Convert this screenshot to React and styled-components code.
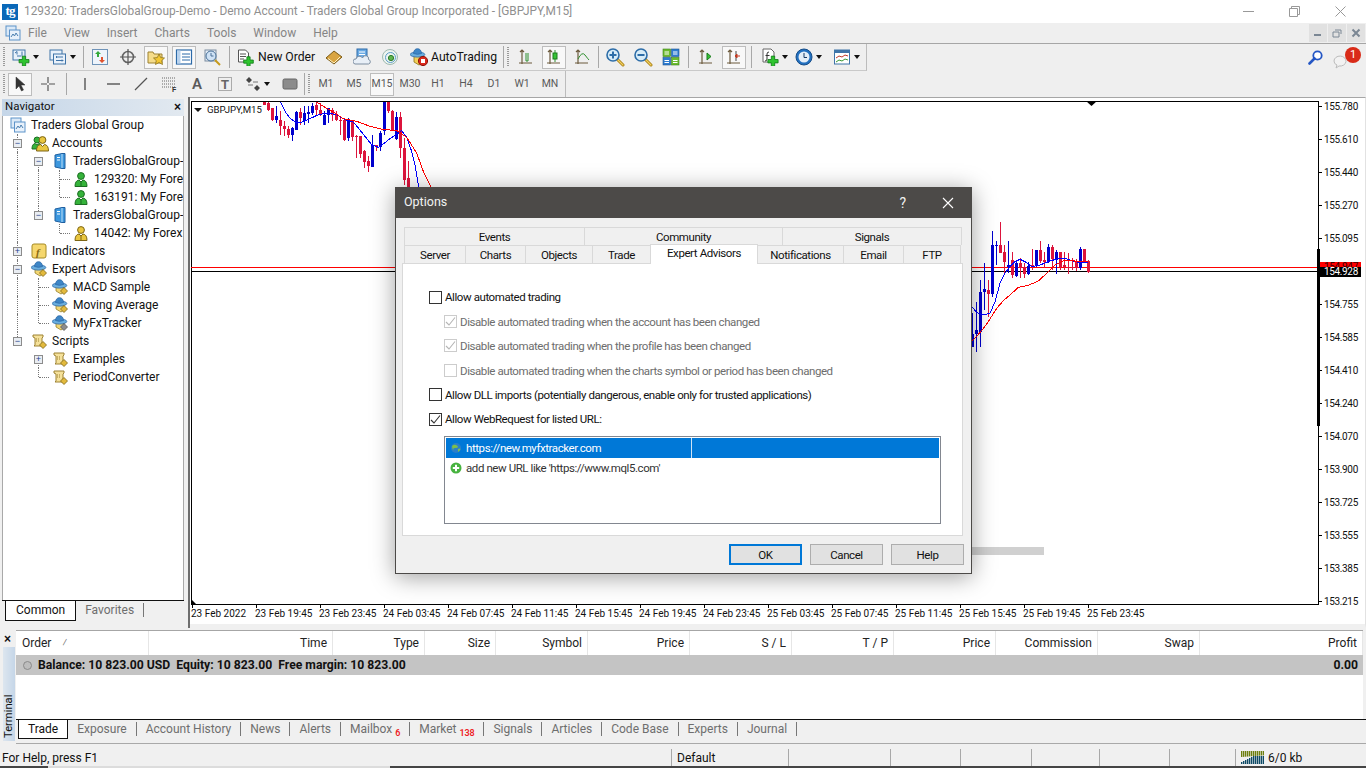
import React from "react";
import styled, { createGlobalStyle } from "styled-components";

const UI = 'Roboto, "Liberation Sans", sans-serif';

const GlobalStyle = createGlobalStyle`
  html, body { margin: 0; padding: 0; background: #f0f0f0; overflow: hidden; }
  * { box-sizing: border-box; }
`;

const Page = styled.div`
  position: relative;
  width: 1366px;
  height: 768px;
  display: flex;
  flex-direction: column;
  overflow: hidden;
  font: 12px/1 ${UI};
  color: #111;
  background: #f0f0f0;
`;

/* title + menu */
const TitleBar = styled.div`
  height: 23px;
  flex: none;
  background: #fff;
  display: flex;
  align-items: center;
  padding-left: 2px;
  color: #8f8f8f;
  font-size: 11.9px;
`;
const Logo = styled.div`
  width: 16px;
  height: 16px;
  background: #0a68b8;
  color: #fff;
  font: bold 13px/14px "Liberation Serif", serif;
  text-align: center;
  margin-right: 6px;
  letter-spacing: -1px;
`;
const WinControls = styled.div`
  margin-left: auto;
  display: flex;
  align-items: center;
  padding-right: 20px;
  gap: 35px;
`;
const MenuBar = styled.div`
  height: 21px;
  flex: none;
  display: flex;
  align-items: center;
  padding-left: 5px;
  background: #efefef;
  border-bottom: 1px solid #a6a6a6;
  color: #858585;
`;
const MenuItem = styled.span`
  margin-left: ${(p) => (p.$first ? "7px" : "17px")};
`;
const MdiGroup = styled.div`
  margin-left: auto;
  display: flex;
  gap: 1px;
  align-self: flex-start;
  padding-right: 1px;
  padding-top: 1px;
`;
const MdiBtn = styled.div`
  width: 18px;
  height: 18px;
  background: #e1e1e1;
  display: flex;
  align-items: center;
  justify-content: center;
`;

/* toolbars */
const ToolRow = styled.div`
  height: ${(p) => p.$h}px;
  flex: none;
  display: flex;
  align-items: center;
  background: #efefef;
`;
const ToolBand = styled.div`
  height: 100%;
  width: ${(p) => p.$w}px;
  display: flex;
  align-items: center;
  gap: 4px;
  padding-left: 3px;
  border-right: 1px solid #bcbcbc;
  border-bottom: ${(p) => (p.$line ? "1px solid #c9c9c9" : "none")};
`;
const Grip = styled.div`
  flex: none;
  width: 2px;
  height: 20px;
  margin-left: ${(p) => p.$ml || 0}px;
  margin-right: ${(p) => p.$mr || 0}px;
  background: repeating-linear-gradient(#9a9a9a 0 1px, transparent 1px 2px);
`;
const Sep = styled.div`
  flex: none;
  width: 1px;
  height: 22px;
  margin-left: ${(p) => p.$ml || 0}px;
  margin-right: ${(p) => p.$mr || 0}px;
  background: #a8a8a8;
`;
const Btn = styled.div`
  flex: none;
  width: ${(p) => p.$w || 24}px;
  height: 23px;
  margin-left: ${(p) => p.$ml || 0}px;
  padding-left: ${(p) => (p.$pl === undefined ? 0 : p.$pl)}px;
  display: flex;
  align-items: center;
  justify-content: ${(p) => (p.$pl === undefined ? "center" : "flex-start")};
  gap: ${(p) => p.$gap || 0}px;
  border: 1px solid ${(p) => (p.$on ? "#bdbdbd" : "transparent")};
  background: ${(p) => (p.$on ? "#f8f8f8" : "transparent")};
  font-size: ${(p) => p.$fs || 12.2}px;
  font-weight: ${(p) => p.$fw || 400};
  white-space: nowrap;
  color: ${(p) => (p.$dim ? "#5a5a5a" : "#111")};
`;
const Caret = styled.i`
  display: block;
  flex: none;
  width: 0;
  height: 0;
  margin-left: 3px;
  border-top: 4px solid #111;
  border-left: 3.5px solid transparent;
  border-right: 3.5px solid transparent;
`;
const BellWrap = styled.div`
  margin-left: auto;
  display: flex;
  align-items: center;
  gap: 10px;
  padding-right: 5px;
`;
const Bubble = styled.div`
  position: relative;
  width: 28px;
  height: 20px;
  padding-top: 7px;
`;
const Badge = styled.div`
  position: absolute;
  right: 0;
  top: -1px;
  width: 16px;
  height: 16px;
  border-radius: 50%;
  background: #d92b18;
  color: #fff;
  font-size: 11px;
  line-height: 16px;
  text-align: center;
`;

/* workspace */
const Workspace = styled.div`
  height: 531px;
  flex: none;
  display: flex;
`;
const Navigator = styled.aside`
  width: 190px;
  flex: none;
  padding: 2px 4px 6px 2px;
  display: flex;
  flex-direction: column;
  border-right: 2px solid #6e6e6e;
`;
const NavHead = styled.div`
  height: 17px;
  flex: none;
  display: flex;
  align-items: center;
  justify-content: space-between;
  padding: 0 3px 2px;
  font-size: 11.5px;
  background: linear-gradient(90deg, #c5d6e8, #e2e9f0);
`;
const CloseMark = styled.span`
  font: bold 12px/1 "Liberation Sans", sans-serif;
  color: #111;
`;
const TreeBox = styled.div`
  flex: 1;
  min-height: 0;
  background: #fff;
  border-left: 1px solid #a9a9a9;
  border-right: 1px solid #a9a9a9;
  overflow: hidden;
  padding-left: 4px;
`;
const TreeRow = styled.div`
  height: 18px;
  display: flex;
  align-items: center;
  white-space: nowrap;
`;
const TreeCell = styled.div`
  position: relative;
  flex: none;
  width: 21px;
  height: 18px;
  display: flex;
  align-items: center;
  justify-content: center;
  &::before {
    content: "";
    position: absolute;
    left: 10px;
    top: ${(p) => (p.$line === "down" ? "9px" : "0")};
    bottom: ${(p) => (p.$line === "up" ? "9px" : "0")};
    border-left: ${(p) => (p.$line ? "1px dotted #777" : "none")};
  }
  &::after {
    content: "";
    position: absolute;
    left: 11px;
    right: 0;
    top: 9px;
    border-top: ${(p) => (p.$arm ? "1px dotted #777" : "none")};
  }
`;
const Expander = styled.div`
  position: relative;
  z-index: 1;
  width: 9px;
  height: 9px;
  background: #e9edf2;
  border: 1px solid #8c8c8c;
  display: flex;
  align-items: center;
  justify-content: center;
  font: 9px/7px "Liberation Sans", sans-serif;
  color: #25408f;
`;
const TreeIcon = styled.div`
  flex: none;
  width: 16px;
  height: 16px;
  margin: 0 5px 0 3px;
`;
const BottomTabs = styled.div`
  flex: none;
  height: ${(p) => p.$h}px;
  display: flex;
  padding-left: ${(p) => p.$pl}px;
  background: #f0f0f0;
  border-top: 1px solid #111;
  white-space: nowrap;
`;
const BottomTab = styled.div`
  height: ${(p) => (p.$on ? p.$th + "px" : "14px")};
  margin-top: ${(p) => (p.$on ? "0" : "2px")};
  display: flex;
  align-items: center;
  padding: ${(p) => (p.$on ? `0 ${p.$px}px 1px` : "0 9px")};
  background: ${(p) => (p.$on ? "#fff" : "transparent")};
  color: ${(p) => (p.$on ? "#111" : "#6e6e6e")};
  border-left: ${(p) => (p.$on ? "1px solid #111" : "none")};
  border-right: 1px solid ${(p) => (p.$on ? "#111" : "#777")};
  border-bottom: ${(p) => (p.$on ? "1px solid #111" : "none")};
`;
const RedCount = styled.span`
  color: #ee1c25;
  font-size: 9px;
  font-weight: 600;
  letter-spacing: -0.2px;
  margin: 8px 0 0 3px;
`;

const ChartWin = styled.main`
  flex: 1;
  min-width: 0;
  background: #fff;
  border-top: 1px solid #a6a6a6;
  padding: 3px 3px 0 1px;
  display: flex;
  flex-direction: column;
  border-right: 1px solid #e2e2e2;
  border-bottom: 4px solid #f0f0f0;
`;
const ChartTop = styled.div`
  display: flex;
  height: 504px;
  flex: none;
`;
const Plot = styled.div`
  position: relative;
  width: 1128px;
  height: 504px;
  flex: none;
  border: 1px solid #000;
  svg { display: block; position: absolute; left: -1px; top: -1px; }
`;
const ChartLabel = styled.div`
  position: absolute;
  left: 2px;
  top: 2px;
  display: flex;
  align-items: center;
  gap: 5px;
  background: #fff;
  padding-right: 1px;
  font-size: 9.6px;
  line-height: 12px;
  color: #111;
  &::before {
    content: "";
    border-top: 4px solid #111;
    border-left: 4px solid transparent;
    border-right: 4px solid transparent;
  }
`;
const PriceAxis = styled.div`
  position: relative;
  flex: 1;
  padding-left: 5px;
`;
const PriceTick = styled.div`
  position: relative;
  height: 10px;
  margin-bottom: 23px;
  font-size: 10px;
  letter-spacing: -0.35px;
  line-height: 12px;
  color: #111;
  &::before {
    content: "";
    position: absolute;
    left: -5px;
    top: 5px;
    width: 3px;
    border-top: 1px solid #000;
  }
`;
const PriceTag = styled.div`
  position: absolute;
  left: 1px;
  top: ${(p) => p.$top}px;
  width: 41px;
  height: ${(p) => p.$h}px;
  padding-left: 4px;
  overflow: hidden;
  background: ${(p) => p.$bg};
  color: ${(p) => p.$fg};
  font-size: 10px;
  letter-spacing: -0.35px;
  line-height: 10px;
`;
const ScaleBar = styled.div`
  position: absolute;
  left: -2px;
  top: 148px;
  width: 3px;
  height: 177px;
  background: #000;
`;
const TimeAxis = styled.div`
  height: 20px;
  flex: none;
  display: flex;
`;
const TimeTick = styled.div`
  position: relative;
  width: 64px;
  flex: none;
  padding-top: 4px;
  font-size: 10px;
  line-height: 10px;
  color: #111;
  white-space: nowrap;
  &::before {
    content: "";
    position: absolute;
    left: 1px;
    top: -1px;
    height: 4px;
    border-left: 1px solid #000;
  }
`;

/* terminal */
const Terminal = styled.section`
  height: 118px;
  flex: none;
  display: flex;
  padding-top: 2px;
  background: #f0f0f0;
`;
const DockStrip = styled.div`
  width: 16px;
  flex: none;
  display: flex;
  flex-direction: column;
  padding: 3px 1px 5px 3px;
  gap: 4px;
`;
const DockClose = styled(CloseMark)`
  padding-left: 1px;
  height: 10px;
`;
const DockTitle = styled.div`
  flex: 1;
  display: flex;
  justify-content: flex-start;
  padding-top: 3px;
  writing-mode: vertical-rl;
  transform: rotate(180deg);
  background: linear-gradient(90deg, #c5d6e8, #dde6ef);
  font-size: 11.2px;
  line-height: 12px;
  color: #111;
`;
const TermBody = styled.div`
  flex: 1;
  min-width: 0;
  display: flex;
  flex-direction: column;
  padding-right: 3px;
  padding-bottom: 2px;
`;
const HeadRow = styled.div`
  height: 25px;
  flex: none;
  display: grid;
  grid-template-columns: 133px 184px 92px 71px 92px 102px 102px 102px 102px 102px 102px 1fr;
  background: #fff;
  border-top: 1px solid #a6a6a6;
`;
const HeadCell = styled.div`
  display: flex;
  align-items: center;
  justify-content: ${(p) => (p.$left ? "space-between" : "flex-end")};
  padding: 0 5px 0 ${(p) => (p.$left ? "6px" : "0")};
  border-right: 1px solid #e6e6e6;
  color: #222;
`;
const SortMark = styled.span`
  color: #777;
  margin-right: 76px;
  font-size: 10px;
`;
const BalanceRow = styled.div`
  height: 20px;
  flex: none;
  display: flex;
  align-items: center;
  padding: 0 5px 0 7px;
  background: #c4c4c4;
  font-weight: 700;
  font-size: 12.2px;
  color: #111;
  gap: 6px;
`;
const BalanceDot = styled.span`
  width: 9px;
  height: 9px;
  border-radius: 50%;
  border: 1px solid #8a8a8a;
  background: #bdbdbd;
`;
const BalanceValue = styled.span`
  margin-left: auto;
`;
const EmptyGrid = styled.div`
  flex: 1;
  background: #fff;
`;
const TermTabsWrap = styled.div`
  height: 25px;
  flex: none;
  border-bottom: 1px solid #a9a9a9;
  margin-right: -3px;
`;
const StatusBar = styled.footer`
  height: 20px;
  flex: none;
  display: flex;
  align-items: flex-end;
  background: #f0f0f0;
`;
const StatusCell = styled.div`
  width: ${(p) => p.$w}px;
  height: 17px;
  flex: none;
  display: flex;
  align-items: center;
  gap: 4px;
  padding-left: ${(p) => (p.$flush ? "2px" : "5px")};
  border-right: ${(p) => (p.$end ? "none" : "1px solid #a8a8a8")};
  color: #111;
`;
const TaskStrip = styled.div`
  height: 2px;
  flex: none;
  display: flex;
  background: #454545;
`;
const TaskGap = styled.div`
  width: 342px;
  margin-left: 48px;
  background: #dcdcdc;
`;

/* dialog */
const Dialog = styled.div`
  position: absolute;
  left: 395px;
  top: 187px;
  width: 577px;
  height: 387px;
  display: flex;
  flex-direction: column;
  background: #f0f0f0;
  border: 1px solid #4c4a48;
  box-shadow: 0 3px 22px rgba(0, 0, 0, 0.38);
  font-size: 11.5px;
  letter-spacing: -0.42px;
`;
const DlgTitle = styled.div`
  height: 30px;
  flex: none;
  display: flex;
  align-items: center;
  padding: 0 17px 1px 8px;
  background: #4c4a48;
  color: #f2f2f2;
  font-size: 12.5px;
  letter-spacing: 0;
`;
const DlgHelp = styled.span`
  margin-left: auto;
  margin-right: 36px;
  font-size: 14px;
`;
const DlgBody = styled.div`
  flex: 1;
  padding: 9px 8px 0;
  display: flex;
  flex-direction: column;
`;
const TabRow = styled.div`
  height: 18px;
  flex: none;
  display: flex;
  align-items: flex-end;
`;
const DlgTab = styled.div`
  position: relative;
  width: ${(p) => p.$w}px;
  height: ${(p) => (p.$on ? "20px" : "18px")};
  flex: none;
  display: flex;
  align-items: ${(p) => (p.$on ? "flex-start" : "center")};
  justify-content: center;
  padding-top: 3px;
  z-index: ${(p) => (p.$on ? 2 : 0)};
  margin-bottom: ${(p) => (p.$on ? "-1px" : "0")};
  background: ${(p) => (p.$on ? "#fff" : "#f0f0f0")};
  border: 1px solid #d9d9d9;
  border-bottom: none;
  margin-right: -1px;
  &:last-child { margin-right: 0; }
`;
const OptionPanel = styled.div`
  width: 561px;
  height: 273px;
  flex: none;
  margin-left: -2px;
  padding: 21px 0 0 26px;
  background: #fff;
  border: 1px solid #d9d9d9;
`;
const CheckRow = styled.div`
  height: 24.4px;
  display: flex;
  align-items: center;
  gap: 3px;
  padding-left: ${(p) => (p.$sub ? "15px" : "0")};
  color: ${(p) => (p.$off ? "#6d6d6d" : "#111")};
`;
const CheckLabel = styled.span`
  padding-top: 2px;
`;
const CheckBox = styled.div`
  width: 13px;
  height: 13px;
  flex: none;
  display: flex;
  align-items: center;
  justify-content: center;
  background: #fff;
  border: 1px solid ${(p) => (p.$off ? "#cccccc" : "#333")};
`;
const UrlList = styled.div`
  width: 497px;
  height: 88px;
  margin: 5px 0 0 15px;
  padding: 1px;
  background: #fff;
  border: 1px solid #828790;
`;
const UrlRow = styled.div`
  height: 20px;
  display: flex;
  align-items: center;
  background: ${(p) => (p.$sel ? "#0078d7" : "transparent")};
  color: ${(p) => (p.$sel ? "#fff" : "#333")};
`;
const UrlCell = styled.div`
  width: 246px;
  height: 100%;
  display: flex;
  align-items: center;
  gap: 4px;
  padding-left: 4px;
  white-space: nowrap;
  border-right: ${(p) => (p.$sel ? "1px solid #cfe3f5" : "none")};
`;
const DlgFooter = styled.div`
  display: flex;
  justify-content: flex-end;
  gap: 8px;
  margin: 8px -1px 0 0;
`;
const DlgButton = styled.div`
  width: 73px;
  height: 21px;
  display: flex;
  align-items: center;
  justify-content: center;
  padding-top: 2px;
  background: #e1e1e1;
  border: ${(p) => (p.$primary ? "2px solid #0078d7" : "1px solid #adadad")};
  color: #111;
`;

/* icon primitives */
const Svg = ({ s = 16, w, h, children, vb }) => (
  <svg width={w || s} height={h || s} viewBox={vb || `0 0 ${w || s} ${h || s}`} style={{ flex: "none", display: "block" }}>
    {children}
  </svg>
);
const GreenPlus = ({ x = 9, y = 9, r = 4 }) => (
  <path
    d={`M${x - r / 2} ${y - r - 0.5}h${r}v${r}h${r}v${r}h${-r}v${r}h${-r}v${-r}h${-r}v${-r}h${r}z`}
    fill="#2fc42f"
    stroke="#0f7a18"
    strokeWidth=".8"
  />
);
const Diamond = ({ x, y, c = "#e2b93c", e = "#7d6514" }) => (
  <path d={`M${x} ${y - 3.5}l3.5 3.5l-3.5 3.5l-3.5-3.5z`} fill={c} stroke={e} strokeWidth=".8" />
);
const Axes = ({ children }) => (
  <Svg s={18}>
    <path d="M5 2v14M2 15h13M3 4l2-2l2 2" fill="none" stroke="#6c5a3d" strokeWidth="1.2" />
    {children}
  </Svg>
);
const Magnifier = ({ minus }) => (
  <Svg s={20}>
    <path d="M12 12l6 6" stroke="#a97e10" strokeWidth="3" strokeLinecap="round" />
    <path d="M12 12l6 6" stroke="#f0d060" strokeWidth="1.2" strokeLinecap="round" />
    <circle cx="8" cy="8" r="6" fill="#d7ecf8" stroke="#2d6da8" strokeWidth="1.6" />
    <path d={minus ? "M4.5 8h7" : "M4.5 8h7M8 4.5v7"} stroke="#2d6da8" strokeWidth="2" />
  </Svg>
);
const WindowGlyph = () => (
  <Svg s={16}>
    <rect x="1" y="1" width="10" height="10" fill="#dbe9f7" stroke="#5d93c9" />
    <rect x="4.5" y="5" width="10.5" height="10" fill="#e8f1fb" stroke="#5d93c9" />
    <path d="M6 12l2-3l1.5 2l1.5-3l2 3" fill="none" stroke="#4a7fb0" />
  </Svg>
);
const NewChartIcon = () => (
  <Svg s={18}>
    <rect x="1" y="2" width="12" height="10" fill="#e9f1fa" stroke="#3f74a8" />
    <path d="M3 5l2-1.5v3M5 8h4M10 3.5v5" stroke="#3f74a8" fill="none" />
    <GreenPlus x={12} y={12} r={3.3} />
  </Svg>
);
const ProfilesIcon = () => (
  <Svg s={18}>
    <rect x="1" y="2" width="12" height="10" fill="#e9f1fa" stroke="#3f74a8" />
    <rect x="4.5" y="6" width="12" height="10" fill="#e9f1fa" stroke="#3f74a8" />
    <path d="M7 9h7M7 12.5h7M8 8l-1 1l1 1M13 11.5l1 1l-1 1" stroke="#3f74a8" fill="none" />
  </Svg>
);
const MarketIcon = () => (
  <Svg s={18}>
    <rect x="1.5" y="1.5" width="15" height="15" fill="#eef4fb" stroke="#6f93b8" />
    <path d="M7 3l3 3h-2v3h-2v-3h-2z" fill="#33a93c" />
    <path d="M11 15l-3-3h2v-3h2v3h2z" fill="#e0532f" />
  </Svg>
);
const CrossIcon = () => (
  <Svg s={18}>
    <circle cx="9" cy="9" r="5.5" fill="none" stroke="#666" strokeWidth="1.6" />
    <path d="M9 1v16M1 9h16" stroke="#555" strokeWidth="1.2" />
  </Svg>
);
const FolderStarIcon = () => (
  <Svg s={18}>
    <path d="M1 4h5l1 2h8v9H1z" fill="#f5dc8a" stroke="#9d8232" />
    <path d="M12 6l1.7 3.6l3.8.4l-2.8 2.6l.8 3.9l-3.5-2l-3.5 2l.8-3.9l-2.8-2.6l3.8-.4z" fill="#f3c733" stroke="#8c7320" strokeWidth=".8" />
  </Svg>
);
const TermIcon = () => (
  <Svg s={18}>
    <rect x="1.5" y="2" width="15" height="14" fill="#fff" stroke="#2c6aa8" strokeWidth="1.2" />
    <rect x="2" y="2.5" width="3.5" height="13" fill="#b9d3ee" />
    <path d="M7 6h8M7 9h8M7 12h8" stroke="#2c6aa8" />
  </Svg>
);
const TesterIcon = () => (
  <Svg s={18}>
    <rect x="2" y="2" width="11" height="11" fill="#e3ecf6" stroke="#7d8ea1" />
    <circle cx="8" cy="8" r="5" fill="#cfe2f5" stroke="#4a7198" />
    <path d="M8 5v3h2.5" stroke="#4a7198" fill="none" />
    <path d="M12 12l5 5" stroke="#c69a1c" strokeWidth="2" />
  </Svg>
);
const OrderIcon = () => (
  <Svg s={17}>
    <path d="M1.5 1h7l3 3v9h-10z" fill="#fff" stroke="#555" />
    <path d="M3 5h6M3 7.5h6M3 10h4" stroke="#555" />
    <GreenPlus x={11.5} y={11.5} r={3.2} />
  </Svg>
);
const BookIcon = () => (
  <Svg s={18}>
    <path d="M1 10l8-7l8 6l-8 7z" fill="#d9a441" stroke="#7a5a15" />
    <path d="M3 10.5l6 4.5l6-6" fill="none" stroke="#fff3c8" />
  </Svg>
);
const CloudIcon = () => (
  <Svg s={18}>
    <rect x="4" y="1" width="10" height="10" fill="#6aaae4" stroke="#2c6aa8" />
    <path d="M6 4h6M6 6.5h6" stroke="#fff" />
    <path d="M2 16a2.5 2.5 0 0 1 1-5a3.5 3.5 0 0 1 6.5-1a3 3 0 0 1 6 1.5a2.3 2.3 0 0 1 0 4.5z" fill="#e8eff7" stroke="#7c8da0" />
  </Svg>
);
const SignalIcon = () => (
  <Svg s={18}>
    <circle cx="9" cy="9" r="7.5" fill="#edf4ef" stroke="#9eb9b0" />
    <circle cx="9.5" cy="9.5" r="5" fill="none" stroke="#5b9cc9" />
    <circle cx="10" cy="10" r="2.6" fill="#5fb54d" stroke="#2a7a2a" />
  </Svg>
);
const HatShape = () => (
  <>
    <ellipse cx="7.5" cy="6.5" rx="7.3" ry="2.6" fill="#6aaede" stroke="#2c6aa8" strokeWidth=".8" />
    <path d="M3.5 5.5q.5-4.8 4-4.8t4 4.8q-4 1.6-8 0z" fill="#3e86c6" stroke="#2c6aa8" strokeWidth=".8" />
  </>
);
const AutoIcon = () => (
  <Svg s={18}>
    <path d="M4 8h10v6l-5 3l-5-3z" fill="#f2cf58" stroke="#8a7318" strokeWidth=".8" />
    <HatShape />
    <circle cx="13" cy="13" r="4.6" fill="#d9281c" stroke="#8c120a" />
    <rect x="11" y="11" width="4" height="4" fill="#fff" />
  </Svg>
);
const TileIcon = () => (
  <Svg s={18}>
    <rect x="1" y="1" width="7.5" height="7.5" fill="#6dbb2e" stroke="#3a8318" strokeWidth=".6" />
    <rect x="9.5" y="1" width="7.5" height="7.5" fill="#2e7cd0" stroke="#1d558f" strokeWidth=".6" />
    <rect x="1" y="9.5" width="7.5" height="7.5" fill="#2e7cd0" stroke="#1d558f" strokeWidth=".6" />
    <rect x="9.5" y="9.5" width="7.5" height="7.5" fill="#6dbb2e" stroke="#3a8318" strokeWidth=".6" />
    <path d="M2.5 4h4.5M2.5 6h4.5M11 4h4.5M11 6h4.5M2.5 12.5h4.5M2.5 14.5h4.5M11 12.5h4.5M11 14.5h4.5" stroke="#fff" />
  </Svg>
);
const IndicatorAddIcon = () => (
  <Svg s={18}>
    <path d="M2 1h8l3 3v10H2z" fill="#fff" stroke="#666" />
    <path d="M8 4q-2 0-2 2v5q0 2-2 2M4.5 7.5h4" stroke="#333" fill="none" />
    <GreenPlus x={12} y={12} r={3.4} />
  </Svg>
);
const ClockIcon = () => (
  <Svg s={18}>
    <circle cx="9" cy="9" r="8" fill="#2270c0" stroke="#164d88" />
    <circle cx="9" cy="9" r="5.5" fill="#e4eef8" />
    <path d="M9 5v4.5h3" stroke="#163a66" fill="none" />
  </Svg>
);
const TemplateIcon = () => (
  <Svg s={18}>
    <rect x="1.5" y="2" width="15" height="14" fill="#fff" stroke="#3f74a8" />
    <rect x="1.5" y="2" width="15" height="3" fill="#3f74a8" />
    <path d="M3 10l3-2l3 1l3-2l3 1" fill="none" stroke="#c0392b" />
    <path d="M3 14l3-2l3 1l3-2l3 1" fill="none" stroke="#3a9a35" />
  </Svg>
);
const PlainIcon = ({ d, sw = 1.2, c = "#555", fill = "none" }) => (
  <Svg s={16}>
    <path d={d} stroke={c} strokeWidth={sw} fill={fill} />
  </Svg>
);
const ChannelIcon = () => (
  <Svg s={18}>
    <path d="M2 3h13M2 6h13M2 9h13M2 12h13" stroke="#666" strokeDasharray="1 1" />
    <text x="12" y="17" fontSize="7" fontWeight="700" fontFamily="Liberation Sans" fill="#333">F</text>
  </Svg>
);
const TextBoxIcon = () => (
  <Svg s={16}>
    <rect x="1.5" y="1.5" width="13" height="13" fill="none" stroke="#666" strokeDasharray="1 1" />
    <text x="4" y="13" fontSize="13" fontWeight="700" fontFamily="Liberation Sans" fill="#666">T</text>
  </Svg>
);
const ArrowsIcon = () => (
  <Svg s={16}>
    <path d="M4 1l3 3l-3 3l-3-3zM12 9l3 3l-3 3l-3-3z" fill="#444" />
    <path d="M3 9h5M8 6h5" stroke="#777" />
  </Svg>
);
const RectIcon = () => (
  <Svg s={16}>
    <rect x="1" y="3" width="14" height="10" rx="1.5" fill="#8c8c8c" stroke="#666" />
  </Svg>
);
const SearchIcon = () => (
  <Svg s={15}>
    <circle cx="9.5" cy="5.5" r="4.2" fill="#fff" stroke="#2456c4" strokeWidth="1.8" />
    <path d="M6.5 8.5L1.5 13.5" stroke="#2456c4" strokeWidth="2.6" strokeLinecap="round" />
  </Svg>
);
const PersonIcon = ({ c = "#35b33a", e = "#1c6d22" }) => (
  <Svg s={16}>
    <circle cx="8" cy="5" r="3.4" fill={c} stroke={e} />
    <path d="M2 15.5q0-6 4-6.5l2 2l2-2q4 .5 4 6.5z" fill={c} stroke={e} />
    <path d="M8 11v4" stroke={e} />
  </Svg>
);
const AccountsIcon = () => (
  <Svg s={18}>
    <circle cx="6" cy="5" r="3" fill="#35b33a" stroke="#1c6d22" />
    <path d="M1 14q0-5 3-5.5l2 1.5l2-1.5q3 .5 3 5.5z" fill="#35b33a" stroke="#1c6d22" />
    <circle cx="11.5" cy="5" r="3.4" fill="#e9c63f" stroke="#7d6514" />
    <path d="M5.5 16q0-6 4-6.5l2 2l2-2q4 .5 4 6.5z" fill="#e9c63f" stroke="#7d6514" />
  </Svg>
);
const ServerIcon = () => (
  <Svg s={16}>
    <path d="M3 2l7-1.5h3v15h-3l-7-1.5z" fill="#3c97de" stroke="#1f5f9f" />
    <path d="M10 1v14" stroke="#bfe0f7" />
    <path d="M5 4.5h3M5 7h3" stroke="#fff" />
  </Svg>
);
const IndicatorIcon = () => (
  <Svg s={16}>
    <rect x="1" y="1" width="14" height="14" rx="2" fill="#f5d76e" stroke="#a58a25" />
    <text x="5" y="12.5" fontSize="11" fontStyle="italic" fontWeight="700" fontFamily="Liberation Serif" fill="#8a6a14">f</text>
  </Svg>
);
const HatIcon = ({ gem = "#e2b93c", edge = "#7d6514" }) => (
  <Svg s={16}>
    <path d="M4 8h8v5l-3 2l-5-3z" fill="#f3d673" stroke="#8a7318" strokeWidth=".7" />
    <HatShape />
    <Diamond x={12} y={12} c={gem} e={edge} />
  </Svg>
);
const ScrollIcon = () => (
  <Svg s={16}>
    <path d="M2 2h10v2l-1 1v7l1 1h-9l1-1V5L2 4z" fill="#f5e19a" stroke="#9d8232" />
    <path d="M5 6h4M5 8h4" stroke="#9d8232" strokeDasharray="1 1" />
    <Diamond x={12} y={12} />
  </Svg>
);
const GlobeIcon = () => (
  <Svg s={12}>
    <circle cx="6" cy="6" r="5" fill="#2b7fc9" />
    <path d="M2 4q2-2 4-1t2 2t-3 1t-1 3q-2-2-2-5zM8 7q2-1 2.5 0q-.5 2-2.5 3z" fill="#7cc04a" />
  </Svg>
);
const AddUrlIcon = () => (
  <Svg s={12}>
    <circle cx="6" cy="6" r="5.5" fill="#47b33f" />
    <path d="M6 2.8v6.4M2.8 6h6.4" stroke="#fff" strokeWidth="2" />
  </Svg>
);
const TickMark = ({ c = "#333" }) => (
  <Svg s={11}>
    <path d="M1 6l3 3l6-7.5" fill="none" stroke={c} strokeWidth="1.1" />
  </Svg>
);
const TrafficIcon = () => {
  const bars = Array.from({ length: 12 }, (_, i) => i);
  return (
    <Svg w={23} h={14}>
      {bars.map((i) => (
        <rect key={"u" + i} x={i * 2} y={0} width="1.4" height={6 - i * 0.15} fill="#6d7f10" />
      ))}
      {bars.map((i) => (
        <rect key={"d" + i} x={i * 2} y={13 - Math.min(i + 2, 8)} width="1.4" height={Math.min(i + 2, 8)} fill="#0d4a66" />
      ))}
    </Svg>
  );
};

/* chart data: [x, wickTop, wickBottom, bodyTop, bodyBottom, colour] read off the picture at 3x */
const leftBars = [
  [222, 10, 22, 10, 20, "r"], [234, 10, 40, 15, 35, "r"], [246, 30, 68, 30, 65, "r"], [258, 25, 75, 55, 65, "b"],
  [270, 40, 110, 65, 85, "r"], [282, 70, 115, 85, 92, "r"], [294, 85, 120, 92, 110, "r"], [306, 88, 130, 90, 110, "b"],
  [318, 40, 95, 42, 95, "b"], [330, 30, 80, 42, 60, "r"], [342, 25, 80, 45, 70, "b"], [354, 25, 75, 42, 48, "b"],
  [366, 15, 50, 25, 45, "b"], [378, 10, 50, 22, 35, "r"], [390, 15, 55, 35, 50, "r"], [402, 40, 82, 50, 80, "b"],
  [414, 30, 75, 30, 50, "b"], [426, 30, 70, 35, 52, "r"], [438, 40, 70, 50, 65, "r"], [450, 55, 110, 65, 70, "r"],
  [462, 62, 130, 65, 125, "r"], [474, 60, 130, 70, 120, "b"], [486, 65, 130, 70, 118, "r"], [498, 110, 180, 115, 118, "r"],
  [510, 115, 180, 115, 168, "r"], [522, 155, 210, 160, 192, "r"], [534, 175, 222, 190, 205, "r"], [546, 110, 208, 140, 208, "b"],
  [558, 140, 160, 142, 148, "r"], [570, 100, 158, 105, 148, "b"], [582, 10, 110, 10, 100, "b"], [594, 10, 45, 10, 40, "r"],
  [606, 35, 95, 40, 95, "r"], [618, 42, 125, 58, 122, "b"], [630, 42, 180, 58, 150, "r"], [642, 120, 262, 150, 245, "r"],
  [654, 190, 275, 240, 275, "r"],
].map(([x, a, b, c, d, k]) => [190 + x / 3, 98 + a / 3, 98 + b / 3, 98 + c / 3, 98 + d / 3, k]);

const rightBars = [
  [37, 310, 412, 372, 412, "b"], [49, 275, 425, 360, 372, "b"], [61, 210, 410, 245, 365, "b"], [73, 158, 300, 237, 245, "b"],
  [85, 210, 320, 240, 252, "r"], [97, 62, 260, 105, 252, "b"], [109, 92, 165, 105, 108, "b"], [121, 35, 130, 105, 130, "r"],
  [133, 105, 195, 125, 155, "r"], [145, 92, 190, 165, 170, "b"], [157, 125, 205, 150, 195, "r"], [169, 150, 200, 160, 198, "b"],
  [181, 145, 205, 160, 175, "r"], [193, 160, 205, 170, 192, "r"], [205, 155, 195, 168, 192, "b"], [217, 117, 180, 165, 170, "r"],
  [229, 120, 170, 120, 165, "b"], [241, 93, 160, 120, 152, "r"], [253, 125, 175, 150, 155, "r"], [265, 102, 160, 110, 152, "b"],
  [277, 105, 180, 110, 148, "r"], [289, 120, 192, 125, 150, "b"], [301, 125, 180, 125, 170, "r"], [313, 125, 180, 165, 172, "r"],
  [325, 128, 192, 170, 173, "r"], [337, 145, 180, 172, 175, "r"], [349, 148, 182, 155, 175, "r"], [361, 110, 180, 118, 175, "b"],
  [373, 118, 160, 118, 158, "r"], [385, 150, 190, 152, 185, "r"],
].map(([x, a, b, c, d, k]) => [960 + x / 3, 210 + a / 3, 210 + b / 3, 210 + c / 3, 210 + d / 3, k]);

const toPoints = (pts, ox, oy) => pts.map(([x, y]) => `${ox + x / 3},${oy + y / 3}`).join(" ");

const blueLeft = toPoints([[270, 10], [285, 40], [300, 60], [315, 72], [335, 72], [360, 62], [385, 50], [410, 45], [440, 50], [465, 65], [490, 72], [505, 90], [525, 115], [545, 140], [565, 148], [580, 138], [600, 122], [618, 110], [635, 98], [650, 118], [665, 160], [675, 200], [685, 262], [700, 300]], 190, 98);
const redLeft = toPoints([[380, 12], [400, 25], [430, 42], [460, 62], [500, 70], [540, 85], [580, 95], [620, 97], [650, 118], [680, 165], [700, 220], [722, 265], [740, 300]], 190, 98);
const blueRight = toPoints([[36, 290], [50, 308], [70, 315], [90, 310], [105, 275], [120, 220], [135, 190], [150, 170], [165, 155], [180, 148], [195, 155], [215, 170], [240, 165], [265, 155], [290, 147], [315, 145], [335, 152], [360, 158], [385, 158]], 960, 210);
const redRight = toPoints([[36, 393], [60, 368], [85, 335], [110, 295], [130, 272], [150, 255], [175, 232], [205, 226], [235, 213], [260, 190], [285, 165], [310, 152], [335, 152], [360, 155], [385, 155]], 960, 210);

const Candle = ({ bar }) => {
  const [x, hi, lo, top, bottom, k] = bar;
  const px = Math.round(x);
  const color = k === "r" ? "#dc143c" : "#0000cd";
  return (
    <g fill={color} shapeRendering="crispEdges">
      <rect x={px} y={hi} width="1" height={lo - hi} />
      <rect x={px - 1} y={top} width="3" height={Math.max(bottom - top, 1)} />
    </g>
  );
};

const CandleChart = () => (
  <svg width="1128" height="504" viewBox="191 101 1128 504">
    <rect x="191" y="267" width="1128" height="1" fill="#ff0000" shapeRendering="crispEdges" />
    <rect x="191" y="271" width="1128" height="1" fill="#000" shapeRendering="crispEdges" />
    <rect x="960" y="547" width="84" height="8" fill="#d0d0d0" shapeRendering="crispEdges" />
    {leftBars.map((b, i) => <Candle key={i} bar={b} />)}
    {rightBars.map((b, i) => <Candle key={i} bar={b} />)}
    <polyline points={blueLeft} fill="none" stroke="#0000ff" shapeRendering="crispEdges" />
    <polyline points={redLeft} fill="none" stroke="#ff0000" shapeRendering="crispEdges" />
    <polyline points={blueRight} fill="none" stroke="#0000ff" shapeRendering="crispEdges" />
    <polyline points={redRight} fill="none" stroke="#ff0000" shapeRendering="crispEdges" />
    <path d="M1086 101h11l-5.5 5z" fill="#000" />
    <path d="M192 600l4 4h-4z" fill="#000" />
    <rect x="191" y="101" width="1128" height="1" fill="#000" shapeRendering="crispEdges" />
  </svg>
);

const prices = ["155.780", "155.610", "155.440", "155.270", "155.095", "", "154.755", "154.585", "154.410", "154.240", "154.070", "153.900", "153.725", "153.555", "153.385", "153.215"];
const times = ["23 Feb 2022", "23 Feb 19:45", "23 Feb 23:45", "24 Feb 03:45", "24 Feb 07:45", "24 Feb 11:45", "24 Feb 15:45", "24 Feb 19:45", "24 Feb 23:45", "25 Feb 03:45", "25 Feb 07:45", "25 Feb 11:45", "25 Feb 15:45", "25 Feb 19:45", "25 Feb 23:45"];
const columns = ["Order", "Time", "Type", "Size", "Symbol", "Price", "S / L", "T / P", "Price", "Commission", "Swap", "Profit"];
const timeframes = ["M1", "M5", "M15", "M30", "H1", "H4", "D1", "W1", "MN"];
const menus = ["File", "View", "Insert", "Charts", "Tools", "Window", "Help"];
const termTabs = [["Exposure"], ["Account History"], ["News"], ["Alerts"], ["Mailbox", "6"], ["Market", "138"], ["Signals"], ["Articles"], ["Code Base"], ["Experts"], ["Journal"]];

const tree = [
  { cells: [], icon: <WindowGlyph />, text: "Traders Global Group" },
  { cells: [{ line: "full", box: "−" }], icon: <AccountsIcon />, text: "Accounts" },
  { cells: [{ line: "full" }, { line: "down", box: "−" }], icon: <ServerIcon />, text: "TradersGlobalGroup-Demo" },
  { cells: [{ line: "full" }, { line: "full" }, { line: "full", arm: true }], icon: <PersonIcon />, text: "129320: My Forex Tracker" },
  { cells: [{ line: "full" }, { line: "full" }, { line: "up", arm: true }], icon: <PersonIcon />, text: "163191: My Forex Tracker" },
  { cells: [{ line: "full" }, { line: "up", box: "−" }], icon: <ServerIcon />, text: "TradersGlobalGroup-Live" },
  { cells: [{ line: "full" }, {}, { line: "up", arm: true }], icon: <PersonIcon c="#e9c63f" e="#7d6514" />, text: "14042: My Forex Tracker" },
  { cells: [{ line: "full", box: "+" }], icon: <IndicatorIcon />, text: "Indicators" },
  { cells: [{ line: "full", box: "−" }], icon: <HatIcon />, text: "Expert Advisors" },
  { cells: [{ line: "full" }, { line: "full", arm: true }], icon: <HatIcon />, text: "MACD Sample" },
  { cells: [{ line: "full" }, { line: "full", arm: true }], icon: <HatIcon />, text: "Moving Average" },
  { cells: [{ line: "full" }, { line: "up", arm: true }], icon: <HatIcon gem="#8c8c8c" edge="#555" />, text: "MyFxTracker" },
  { cells: [{ line: "up", box: "−" }], icon: <ScrollIcon />, text: "Scripts" },
  { cells: [{}, { line: "down", box: "+" }], icon: <ScrollIcon />, text: "Examples" },
  { cells: [{}, { line: "up", arm: true }], icon: <ScrollIcon />, text: "PeriodConverter" },
];

const optionRows = [
  { text: "Allow automated trading" },
  { text: "Disable automated trading when the account has been changed", sub: true, checked: true },
  { text: "Disable automated trading when the profile has been changed", sub: true, checked: true },
  { text: "Disable automated trading when the charts symbol or period has been changed", sub: true },
  { text: "Allow DLL imports (potentially dangerous, enable only for trusted applications)" },
  { text: "Allow WebRequest for listed URL:", checked: true },
];

const Drop = ({ children, ...rest }) => (
  <Btn $pl={2} {...rest}>
    {children}
    <Caret />
  </Btn>
);

const Toolbars = () => (
  <>
    <ToolRow $h={27}>
      <ToolBand $w={867} $line>
        <Grip />
        <Drop $w={33}><NewChartIcon /></Drop>
        <Drop $w={30}><ProfilesIcon /></Drop>
        <Sep $ml={3} />
        <Btn><MarketIcon /></Btn>
        <Btn><CrossIcon /></Btn>
        <Btn $on><FolderStarIcon /></Btn>
        <Btn $on><TermIcon /></Btn>
        <Btn><TesterIcon /></Btn>
        <Sep $ml={1} $mr={2} />
        <Btn $w={82} $pl={0} $gap={4}><OrderIcon />New Order</Btn>
        <Btn><BookIcon /></Btn>
        <Btn><CloudIcon /></Btn>
        <Btn><SignalIcon /></Btn>
        <Btn $w={95} $pl={3} $gap={3}><AutoIcon />AutoTrading</Btn>
        <Sep $ml={-2} />
        <Grip $ml={-1} $mr={1} />
        <Btn><Axes><path d="M9 5v8h2M11 5v8" stroke="#2f8f2f" fill="none" /></Axes></Btn>
        <Btn $on><Axes><path d="M10 2v12" stroke="#2f8f2f" /><rect x="8" y="5" width="4" height="6" fill="#35c335" stroke="#1b7a1b" /></Axes></Btn>
        <Btn><Axes><path d="M5 11q4-8 7-4t4 5" stroke="#2f8f2f" fill="none" /></Axes></Btn>
        <Sep />
        <Btn><Magnifier /></Btn>
        <Btn><Magnifier minus /></Btn>
        <Btn><TileIcon /></Btn>
        <Sep $ml={1} $mr={1} />
        <Btn><Axes><path d="M10 5l4 3.5l-4 3.5z" fill="#35c335" stroke="#1b7a1b" /></Axes></Btn>
        <Btn $on><Axes><path d="M11 3v10" stroke="#444" /><path d="M15 8h-3M12 6v4l-2-2z" stroke="#c23b22" fill="#c23b22" /></Axes></Btn>
        <Sep $ml={1} />
        <Drop $w={32} $pl={4}><IndicatorAddIcon /></Drop>
        <Drop $w={30} $ml={2} $pl={0}><ClockIcon /></Drop>
        <Drop $w={30} $ml={4} $pl={0}><TemplateIcon /></Drop>
      </ToolBand>
      <BellWrap>
        <SearchIcon />
        <Bubble>
          <Svg w={15} h={14}>
            <path d="M1 6a6 5 0 1 1 5 5l-3 2l1-3q-3-1-3-4z" fill="#f2f2f2" stroke="#bcbcbc" />
          </Svg>
          <Badge>1</Badge>
        </Bubble>
      </BellWrap>
    </ToolRow>
    <ToolRow $h={26}>
      <ToolBand $w={566}>
        <Grip $mr={-1} />
        <Btn $on><PlainIcon d="M4 1v12l3-3l2.5 5l2-1l-2.5-5h4z" c="#333" fill="#333" sw={.5} /></Btn>
        <Btn><PlainIcon d="M8 1v6M8 9v6M1 8h6M9 8h6" /></Btn>
        <Sep $ml={2} $mr={2} />
        <Btn><PlainIcon d="M8 2v12" sw={1.4} /></Btn>
        <Btn><PlainIcon d="M2 8h13" sw={1.4} /></Btn>
        <Btn><PlainIcon d="M2 14L14 2" /></Btn>
        <Btn><ChannelIcon /></Btn>
        <Btn $dim $fs={15} $fw={600}>A</Btn>
        <Btn><TextBoxIcon /></Btn>
        <Drop $w={32} $pl={3}><ArrowsIcon /></Drop>
        <Btn $ml={1}><RectIcon /></Btn>
        <Sep $ml={-2} />
        <Grip $ml={-1} />
        {timeframes.map((t) => (
          <Btn key={t} $dim $fs={10.5} $on={t === "M15"}>{t}</Btn>
        ))}
      </ToolBand>
    </ToolRow>
  </>
);

const NavigatorPanel = () => (
  <Navigator>
    <NavHead>
      Navigator
      <CloseMark>×</CloseMark>
    </NavHead>
    <TreeBox>
      {tree.map((row) => (
        <TreeRow key={row.text}>
          {row.cells.map((c, i) => (
            <TreeCell key={i} $line={c.line} $arm={c.arm}>
              {c.box && <Expander>{c.box}</Expander>}
            </TreeCell>
          ))}
          <TreeIcon>{row.icon}</TreeIcon>
          {row.text}
        </TreeRow>
      ))}
    </TreeBox>
    <BottomTabs $h={22} $pl={3}>
      <BottomTab $on $th={20} $px={10}>Common</BottomTab>
      <BottomTab>Favorites</BottomTab>
    </BottomTabs>
  </Navigator>
);

const Chart = () => (
  <ChartWin>
    <ChartTop>
      <Plot>
        <CandleChart />
        <ChartLabel>GBPJPY,M15</ChartLabel>
      </Plot>
      <PriceAxis>
        <ScaleBar />
        {prices.map((p, i) => (
          <PriceTick key={i}>{p}</PriceTick>
        ))}
        <PriceTag $top={161} $h={6} $bg="#ff0000" $fg="#400000">154.947</PriceTag>
        <PriceTag $top={166} $h={10} $bg="#000" $fg="#fff">154.928</PriceTag>
      </PriceAxis>
    </ChartTop>
    <TimeAxis>
      {times.map((t) => (
        <TimeTick key={t}>{t}</TimeTick>
      ))}
    </TimeAxis>
  </ChartWin>
);

const TerminalPanel = () => (
  <Terminal>
    <DockStrip>
      <DockClose>×</DockClose>
      <DockTitle>Terminal</DockTitle>
    </DockStrip>
    <TermBody>
      <HeadRow>
        {columns.map((c, i) => (
          <HeadCell key={i} $left={i === 0}>
            {c}
            {i === 0 && <SortMark>⁄</SortMark>}
          </HeadCell>
        ))}
      </HeadRow>
      <BalanceRow>
        <BalanceDot />
        Balance: 10 823.00 USD&nbsp; Equity: 10 823.00&nbsp; Free margin: 10 823.00
        <BalanceValue>0.00</BalanceValue>
      </BalanceRow>
      <EmptyGrid />
      <TermTabsWrap>
        <BottomTabs $h={24} $pl={2}>
          <BottomTab $on $th={19} $px={9}>Trade</BottomTab>
          {termTabs.map(([name, count]) => (
            <BottomTab key={name}>
              {name}
              {count && <RedCount>{count}</RedCount>}
            </BottomTab>
          ))}
        </BottomTabs>
      </TermTabsWrap>
    </TermBody>
  </Terminal>
);

const OptionsDialog = () => (
  <Dialog>
    <DlgTitle>
      Options
      <DlgHelp>?</DlgHelp>
      <Svg s={12}>
        <path d="M1 1l10 10M11 1L1 11" stroke="#fff" strokeWidth="1.1" />
      </Svg>
    </DlgTitle>
    <DlgBody>
      <TabRow>
        <DlgTab $w={181}>Events</DlgTab>
        <DlgTab $w={199}>Community</DlgTab>
        <DlgTab $w={180}>Signals</DlgTab>
      </TabRow>
      <TabRow>
        <DlgTab $w={62}>Server</DlgTab>
        <DlgTab $w={61}>Charts</DlgTab>
        <DlgTab $w={68}>Objects</DlgTab>
        <DlgTab $w={59}>Trade</DlgTab>
        <DlgTab $w={108} $on>Expert Advisors</DlgTab>
        <DlgTab $w={87}>Notifications</DlgTab>
        <DlgTab $w={61}>Email</DlgTab>
        <DlgTab $w={58}>FTP</DlgTab>
      </TabRow>
      <OptionPanel>
        {optionRows.map((r) => (
          <CheckRow key={r.text} $sub={r.sub} $off={r.sub}>
            <CheckBox $off={r.sub}>
              {r.checked && <TickMark c={r.sub ? "#b5b5b5" : "#333"} />}
            </CheckBox>
            <CheckLabel>{r.text}</CheckLabel>
          </CheckRow>
        ))}
        <UrlList>
          <UrlRow $sel>
            <UrlCell $sel><GlobeIcon />https://new.myfxtracker.com</UrlCell>
          </UrlRow>
          <UrlRow>
            <UrlCell><AddUrlIcon />add new URL like 'https://www.mql5.com'</UrlCell>
          </UrlRow>
        </UrlList>
      </OptionPanel>
      <DlgFooter>
        <DlgButton $primary>OK</DlgButton>
        <DlgButton>Cancel</DlgButton>
        <DlgButton>Help</DlgButton>
      </DlgFooter>
    </DlgBody>
  </Dialog>
);

export default function App() {
  return (
    <Page>
      <GlobalStyle />
      <TitleBar>
        <Logo>tg</Logo>
        129320: TradersGlobalGroup-Demo - Demo Account - Traders Global Group Incorporated - [GBPJPY,M15]
        <WinControls>
          <Svg w={11} h={11}><path d="M0 5.5h11" stroke="#999" /></Svg>
          <Svg w={11} h={11}><path d="M2.5 2.5V.5h8v8h-2M.5 2.5h8v8h-8z" fill="none" stroke="#999" /></Svg>
          <Svg w={11} h={11}><path d="M.5.5l10 10M10.5.5l-10 10" stroke="#999" /></Svg>
        </WinControls>
      </TitleBar>
      <MenuBar>
        <WindowGlyph />
        {menus.map((m, i) => (
          <MenuItem key={m} $first={i === 0}>{m}</MenuItem>
        ))}
        <MdiGroup>
          <MdiBtn><Svg s={10}><path d="M1 7h7" stroke="#7b8794" strokeWidth="2" /></Svg></MdiBtn>
          <MdiBtn><Svg s={10}><path d="M3 2h6v4M1 4h6v5H1z" fill="none" stroke="#7b8794" /></Svg></MdiBtn>
          <MdiBtn><Svg s={10}><path d="M1.5 1.5l7 7M8.5 1.5l-7 7" stroke="#7b8794" strokeWidth="2" /></Svg></MdiBtn>
        </MdiGroup>
      </MenuBar>
      <Toolbars />
      <Workspace>
        <NavigatorPanel />
        <Chart />
      </Workspace>
      <TerminalPanel />
      <StatusBar>
        <StatusCell $w={672} $flush>For Help, press F1</StatusCell>
        <StatusCell $w={117}>Default</StatusCell>
        <StatusCell $w={102} />
        <StatusCell $w={70} />
        <StatusCell $w={71} />
        <StatusCell $w={68} />
        <StatusCell $w={70} />
        <StatusCell $w={66} />
        <StatusCell $w={120} $end><TrafficIcon />6/0 kb</StatusCell>
      </StatusBar>
      <TaskStrip><TaskGap /></TaskStrip>
      <OptionsDialog />
    </Page>
  );
}
